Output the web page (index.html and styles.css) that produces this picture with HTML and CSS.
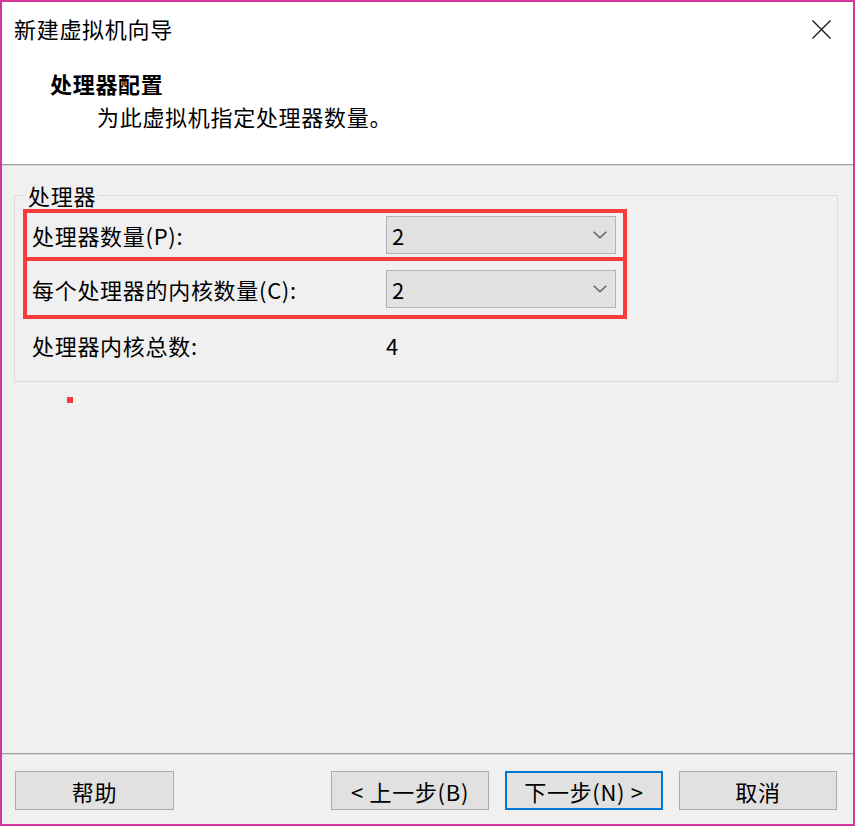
FILE: index.html
```html
<!DOCTYPE html>
<html lang="zh-CN">
<head>
<meta charset="utf-8">
<title>新建虚拟机向导</title>
<link rel="stylesheet" href="styles.css">
</head>
<body>
<div class="window">
  <div class="header">
    <div class="title-row">
      <span class="title">新建虚拟机向导</span>
      <svg class="close" width="19" height="19" viewBox="0 0 19 19"><path d="M0.5 0.5 L18.5 18.5 M18.5 0.5 L0.5 18.5" stroke="#1a1a1a" stroke-width="1.4" fill="none"/></svg>
    </div>
    <div class="heading">处理器配置</div>
    <div class="subtitle">为此虚拟机指定处理器数量。</div>
  </div>
  <div class="sep"></div>
  <div class="content">
    <fieldset class="group">
      <legend>处理器</legend>
      <div class="hl hl-first">
        <div class="row">
          <span class="label">处理器数量(P):</span>
          <div class="select"><span>2</span><svg width="14" height="8" viewBox="0 0 14 8"><path d="M0.7 0.7 L7 6.8 L13.3 0.7" stroke="#606060" stroke-width="1.4" fill="none"/></svg></div>
        </div>
      </div>
      <div class="hl hl-second">
        <div class="row">
          <span class="label">每个处理器的内核数量(C):</span>
          <div class="select"><span>2</span><svg width="14" height="8" viewBox="0 0 14 8"><path d="M0.7 0.7 L7 6.8 L13.3 0.7" stroke="#606060" stroke-width="1.4" fill="none"/></svg></div>
        </div>
      </div>
      <div class="row total">
        <span class="label">处理器内核总数:</span>
        <span class="value">4</span>
      </div>
    </fieldset>
    <div class="dot"></div>
  </div>
  <div class="sep sep-bottom"></div>
  <div class="footer">
    <button class="btn">帮助</button>
    <div class="nav">
      <button class="btn">&lt; 上一步(B)</button>
      <button class="btn btn-default">下一步(N) &gt;</button>
      <button class="btn">取消</button>
    </div>
  </div>
</div>
</body>
</html>
```

FILE: styles.css
```css
* { box-sizing: border-box; }
html, body { margin: 0; padding: 0; }
body {
  font-family: "Noto Sans CJK SC", "Noto Sans", sans-serif;
  font-size: 22px;
  letter-spacing: 0.7px;
  color: #000;
  background: #f0f0f0;
}
.window {
  width: 855px;
  height: 826px;
  border: 2px solid #d4369e;
  display: flex;
  flex-direction: column;
  background: #f0f0f0;
}
.header {
  background: #fff;
  height: 162px;
  padding: 11px 22px 0 12px;
}
.title-row {
  display: flex;
  justify-content: space-between;
  align-items: center;
  height: 30px;
  line-height: 30px;
}
.close { display: block; margin-top: 2px; }
.heading {
  font-weight: bold;
  line-height: 30px;
  margin-top: 25px;
  margin-left: 36px;
}
.subtitle {
  line-height: 30px;
  margin-top: 3px;
  margin-left: 83px;
}
.sep {
  height: 2px;
  border-top: 1px solid #a0a0a0;
  background: #d8d8d8;
}
.content {
  flex: 1;
}
.group {
  margin: 17px 15px 0 12px;
  padding: 0 8px 10px 8px;
  border: 1px solid #dcdcdc;
  min-width: 0;
}
.group legend {
  padding: 0 2px;
  margin-left: 3px;
  line-height: 24px;
}
.hl {
  width: 604px;
  border: 4px solid #fb3b3b;
  padding: 0 7px 0 5px;
  margin-top: 2px;
}
.hl-first { height: 52px; }
.hl-second {
  margin-top: 0;
  border-top: none;
  height: 58px;
  padding-top: 1px;
}
.row {
  display: grid;
  grid-template-columns: 354px 230px;
  align-items: center;
  height: 100%;
}
.total {
  height: 52px;
  padding-left: 9px;
  grid-template-columns: 354px auto;
}
.select {
  height: 38px;
  border: 1px solid #b4b4b4;
  background: #e1e1e1;
  display: flex;
  align-items: center;
  justify-content: space-between;
  padding: 0 8px 0 5px;
}
.select svg { display: block; }
.dot {
  width: 6px;
  height: 6px;
  background: #fb3b3b;
  margin: 15px 0 0 65px;
}
.sep-bottom {
  height: 2px;
  margin-top: 1px;
}
.footer {
  height: 69px;
  padding: 16px 16px 0 13px;
  display: flex;
  justify-content: space-between;
  align-items: flex-start;
}
.nav {
  display: flex;
  gap: 16px;
}
.btn {
  width: 159px;
  height: 39px;
  border: 1px solid #adadad;
  background: #e1e1e1;
  font-family: inherit;
  font-size: 22px;
  letter-spacing: 0.7px;
  color: #000;
  padding: 0;
  line-height: 1;
}
.nav .btn { width: 158px; }
.btn-default {
  border: 2px solid #0078d7;
}
```
